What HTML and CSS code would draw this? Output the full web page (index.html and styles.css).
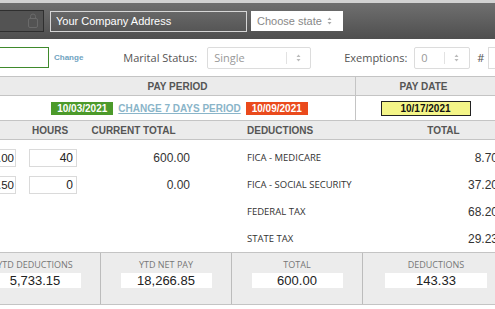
FILE: index.html
```html
<!DOCTYPE html>
<html lang="en">
<head>
    <meta charset="UTF-8">
    <meta name="viewport" content="width=device-width, initial-scale=1.0">
    <title>Payroll | Pay Stub</title>
    <link rel="stylesheet" href="styles.css">
</head>
<body>
<div class="pagina">
    <!-- Barra superior con datos de la empresa -->
    <div class="barra">
        <div class="buscar">
            <svg width="12" height="16" viewBox="0 0 12 16">
                <rect x="1.5" y="5.5" width="9" height="9" rx="1.5" fill="none" stroke="#6a6a6a"/>
                <path d="M3.5 5.5 V3.5 a2.5 2.5 0 0 1 5 0 V5.5" fill="none" stroke="#6a6a6a"/>
            </svg>
        </div>
        <input class="direccion" type="text" value="Your Company Address">
        <div class="estado">Choose state <span class="flechas"><svg width="5" height="8" viewBox="0 0 5 8"><path d="M0.5 3 L2.5 0.5 L4.5 3 Z M0.5 5 L2.5 7.5 L4.5 5 Z" fill="#aaa"/></svg></span></div>
    </div>

    <!-- Datos del empleado -->
    <div class="filtros">
        <input class="empleado" type="text" value="">
        <a class="cambiar" href="#">Change</a>
        <span class="etiqueta marital">Marital Status:</span>
        <div class="selector selector-estado">
            <span>Single</span>
            <span class="divisor"></span>
            <svg width="5" height="8" viewBox="0 0 5 8"><path d="M0.5 3 L2.5 0.5 L4.5 3 Z M0.5 5 L2.5 7.5 L4.5 5 Z" fill="#bbb"/></svg>
        </div>
        <span class="etiqueta exenciones">Exemptions:</span>
        <div class="selector selector-exenciones">
            <span>0</span>
            <span class="divisor"></span>
            <svg width="5" height="8" viewBox="0 0 5 8"><path d="M0.5 3 L2.5 0.5 L4.5 3 Z M0.5 5 L2.5 7.5 L4.5 5 Z" fill="#bbb"/></svg>
        </div>
        <span class="etiqueta numeral">#</span>
        <input class="numero" type="text" value="">
    </div>

    <!-- Periodo de pago -->
    <div class="tabla">
        <div class="periodo">
            <div class="celda cabecera">PAY PERIOD</div>
            <div class="celda cabecera lado">PAY DATE</div>
            <div class="celda fechas">
                <span class="fecha verde">10/03/2021</span>
                <a class="cambiar-periodo" href="#">CHANGE 7 DAYS PERIOD</a>
                <span class="fecha roja">10/09/2021</span>
            </div>
            <div class="celda fechas lado">
                <span class="fecha amarilla">10/17/2021</span>
            </div>
        </div>

        <div class="detalle cabecera-detalle">
            <span class="col-horas">HOURS</span>
            <span class="col-actual">CURRENT TOTAL</span>
            <span class="col-deduccion">DEDUCTIONS</span>
            <span class="col-total">TOTAL</span>
        </div>

        <div class="detalle filas">
            <div class="col-tarifa"><input class="campo tarifa" type="text" value="15.00"></div>
            <div class="col-horas"><input class="campo" type="text" value="40"></div>
            <div class="col-actual">600.00</div>
            <div class="col-deduccion">FICA - MEDICARE</div>
            <div class="col-total">8.70</div>

            <div class="col-tarifa"><input class="campo tarifa" type="text" value="22.50"></div>
            <div class="col-horas"><input class="campo" type="text" value="0"></div>
            <div class="col-actual">0.00</div>
            <div class="col-deduccion">FICA - SOCIAL SECURITY</div>
            <div class="col-total">37.20</div>

            <div class="col-deduccion">FEDERAL TAX</div>
            <div class="col-total">68.20</div>

            <div class="col-deduccion">STATE TAX</div>
            <div class="col-total">29.23</div>
        </div>
    </div>

    <!-- Resumen -->
    <div class="resumen">
        <div class="caja primera">
            <span class="titulo">YTD DEDUCTIONS</span>
            <span class="valor">5,733.15</span>
        </div>
        <div class="caja">
            <span class="titulo">YTD NET PAY</span>
            <span class="valor">18,266.85</span>
        </div>
        <div class="caja">
            <span class="titulo">TOTAL</span>
            <span class="valor">600.00</span>
        </div>
        <div class="caja ultima">
            <span class="titulo">DEDUCTIONS</span>
            <span class="valor">143.33</span>
        </div>
    </div>
</div>
</body>
</html>
```

FILE: styles.css
```css
* {
    margin: 0;
    padding: 0;
    box-sizing: border-box;
}

body {
    font-family: "Liberation Sans", Arial, sans-serif;
    background-color: #fff;
    color: #333;
    overflow: hidden;
}

.pagina {
    width: 495px;
    overflow: hidden;
}

/* Barra superior */
.barra {
    height: 39px;
    border-top: 3px solid #d2d2d2;
    background: linear-gradient(#6f6f6f, #4f4f4f);
    display: flex;
    align-items: center;
}

.buscar {
    flex: none;
    width: 60px;
    height: 22px;
    margin-left: -16px;
    background: #535353;
    border: 1px solid #2f2f2f;
    display: flex;
    justify-content: flex-end;
    align-items: center;
    padding-right: 4px;
}

.direccion {
    flex: none;
    margin-left: 6px;
    width: 197px;
    height: 21px;
    border: 1px solid #d6d6d6;
    background: transparent;
    color: #fff;
    font-family: "Liberation Sans", Arial, sans-serif;
    font-size: 11px;
    padding: 0 5px;
    outline: none;
}

.estado {
    flex: none;
    margin-left: 4px;
    width: 92px;
    height: 20px;
    background: #fff;
    color: #888;
    font-size: 11px;
    display: flex;
    align-items: center;
    gap: 5px;
    padding-left: 6px;
}

.flechas {
    display: flex;
}

/* Fila de filtros */
.filtros {
    height: 37px;
    display: flex;
    align-items: center;
}

input[type="text"] {
    outline: none;
    font-family: "Liberation Sans", Arial, sans-serif;
}

.empleado {
    flex: none;
    width: 64px;
    height: 21px;
    margin-left: -15px;
    border: 1px solid #3f8a2c;
    background: #fff;
}

.cambiar {
    flex: none;
    margin-left: 5px;
    font-size: 8px;
    font-weight: bold;
    color: #6fa3bf;
    text-decoration: none;
}

.etiqueta {
    flex: none;
    white-space: nowrap;
    font-family: "Open Sans", sans-serif;
    font-size: 11px;
    color: #555;
}

.marital {
    margin-left: 40px;
}

.selector {
    flex: none;
    height: 22px;
    border: 1px solid #dcdcdc;
    border-radius: 2px;
    display: flex;
    align-items: center;
    padding-left: 6px;
    font-family: "Open Sans", sans-serif;
    font-size: 11px;
    color: #999;
}

.selector-estado {
    margin-left: 10px;
    width: 104px;
}

.selector-estado span:first-child {
    width: 72px;
}

.selector-exenciones {
    margin-left: 7px;
    width: 56px;
}

.selector-exenciones span:first-child {
    width: 23px;
}

.divisor {
    width: 1px;
    height: 12px;
    background: #e2e2e2;
    margin-right: 9px;
}

.exenciones {
    margin-left: 33px;
}

.numeral {
    margin-left: 7px;
}

.numero {
    flex: none;
    margin-left: 4px;
    width: 40px;
    height: 22px;
    border: 1px solid #dcdcdc;
}

/* Tabla de pago */
.tabla {
    border-top: 1px solid #c4c4c4;
}

.periodo {
    display: grid;
    grid-template-columns: 355px 140px;
    grid-template-rows: 19px 25px;
}

.celda {
    display: flex;
    align-items: center;
    justify-content: center;
    border-bottom: 1px solid #c4c4c4;
}

.lado {
    border-left: 1px solid #c4c4c4;
    padding-right: 4px;
}

.cabecera {
    background: #ebebeb;
    font-size: 10px;
    font-weight: bold;
    color: #555;
}

.fechas {
    gap: 5px;
    padding-left: 4px;
}

.fecha {
    font-size: 10px;
    font-weight: bold;
    line-height: 13px;
    padding: 0 6px;
    color: #fff;
}

.verde {
    background: #4c9a2a;
}

.roja {
    background: #ea4a1c;
}

.amarilla {
    background: #f4f588;
    color: #111;
    border: 1px solid #222;
    width: 90px;
    text-align: center;
}

.cambiar-periodo {
    font-size: 10px;
    font-weight: bold;
    color: #8ab5c9;
}

/* Detalle de horas y deducciones */
.detalle {
    display: grid;
    grid-template-columns: 29px 48px 113px 207px 101px;
    align-items: center;
}

.cabecera-detalle {
    height: 19px;
    background: #ebebeb;
    border-bottom: 1px solid #c4c4c4;
    font-size: 10px;
    font-weight: bold;
    color: #555;
}

.cabecera-detalle .col-horas {
    grid-column: 2;
    text-align: center;
    padding-right: 6px;
}

.cabecera-detalle .col-actual {
    text-align: center;
}

.cabecera-detalle .col-total {
    text-align: center;
    padding-right: 8px;
}

.col-deduccion {
    grid-column: 4;
    padding-left: 57px;
}

.col-actual, .col-total {
    text-align: right;
}

.filas {
    padding-top: 4px;
    grid-auto-rows: 27px;
    font-size: 12px;
}

.filas .col-deduccion {
    font-family: "Open Sans", sans-serif;
    font-size: 9.5px;
    color: #333;
}

.campo {
    display: block;
    width: 48px;
    height: 18px;
    border: 1px solid #dadada;
    text-align: right;
    padding-right: 3px;
    font-size: 12px;
    color: #222;
}

.tarifa {
    width: 40px;
    margin-left: -24px;
    padding-right: 1px;
    font-size: 11.5px;
}

/* Resumen inferior */
.resumen {
    display: flex;
    border-top: 1px solid #c4c4c4;
    border-bottom: 1px solid #c4c4c4;
    background: #ececec;
    height: 53px;
}

.caja {
    flex: none;
    width: 131px;
    display: flex;
    flex-direction: column;
    align-items: center;
    padding-top: 6px;
    border-left: 1px solid #bcbcbc;
}

.primera {
    width: 130px;
    margin-left: -30px;
    border-left: none;
}

.ultima {
    width: 147px;
}

.titulo {
    font-family: "Open Sans", sans-serif;
    font-size: 9px;
    line-height: 11px;
    color: #777;
}

.valor {
    margin-top: 3px;
    width: 70%;
    height: 15px;
    background: #fff;
    text-align: center;
    font-size: 13px;
    line-height: 15px;
    color: #222;
}
```
